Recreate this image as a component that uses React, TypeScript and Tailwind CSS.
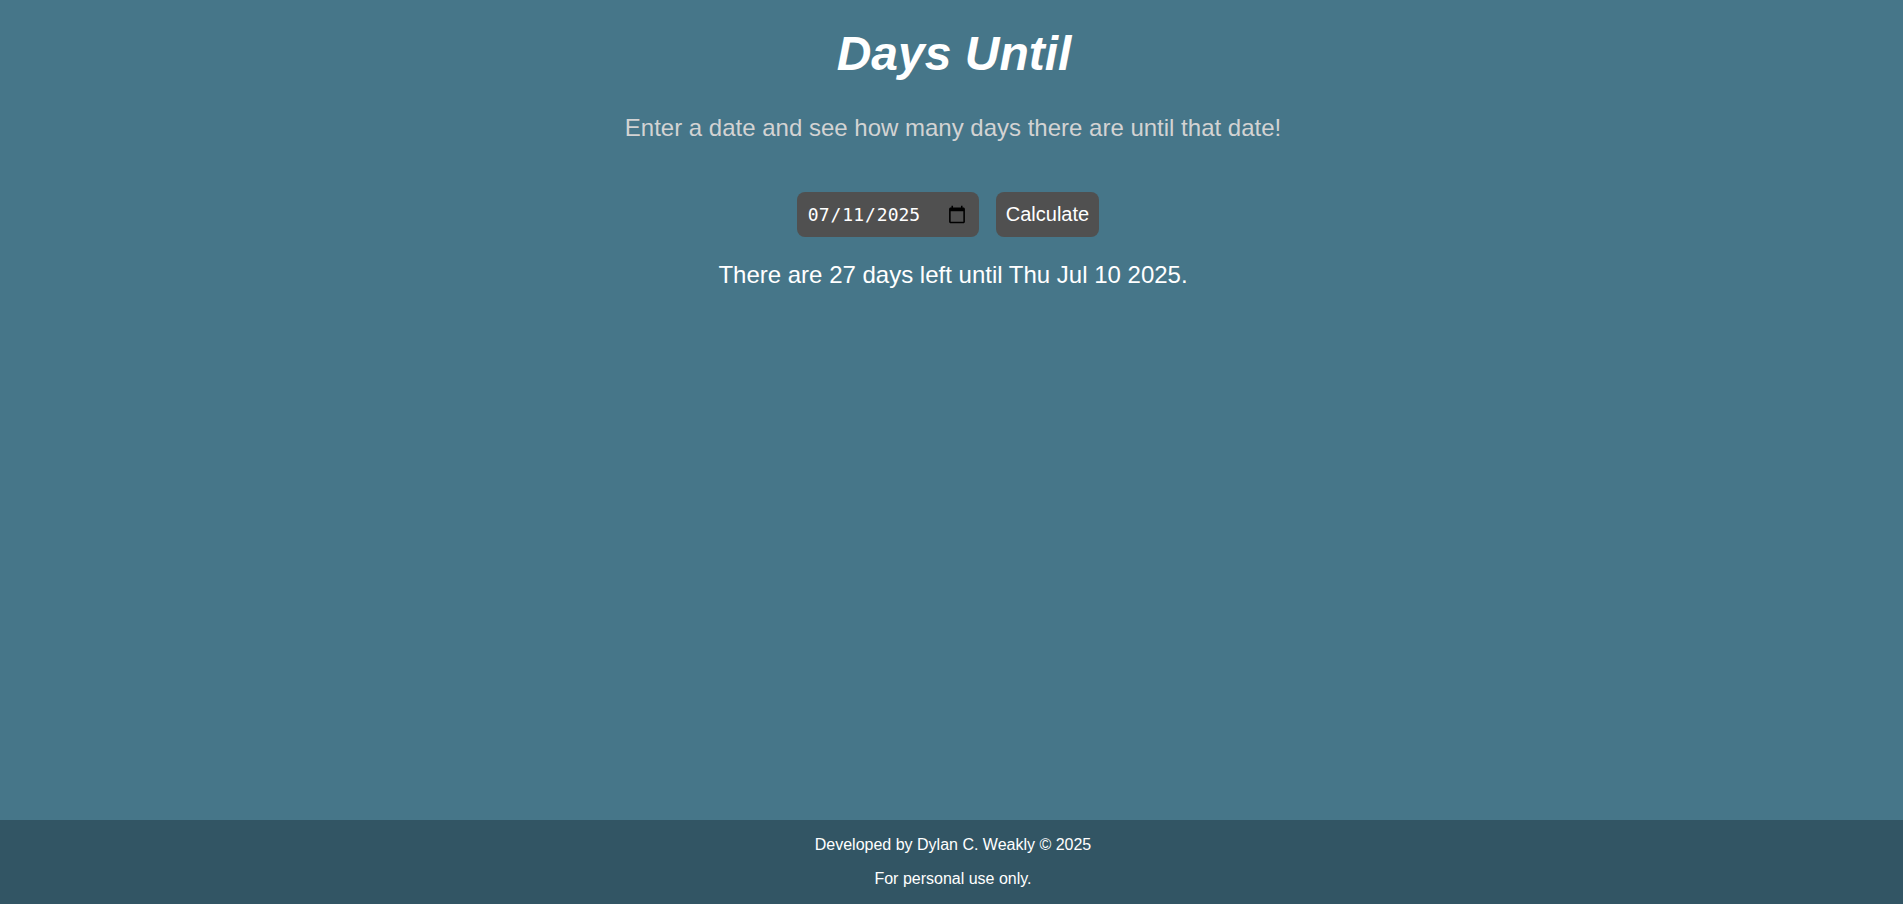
export default function App() {
  return (
    <div className="flex min-h-screen flex-col bg-[#467689] text-center font-['Liberation_Sans',Arial,sans-serif] text-white">
      <main className="flex grow flex-col items-center pt-6 pl-[3px]">
        <h1 className="pl-[2px] text-5xl leading-[60px] font-bold italic">Days Until</h1>
        <p className="mt-7 text-2xl text-[#d3d3d3]">Enter a date and see how many days there are until that date!</p>
        <form className="mt-12 flex gap-[17px] pr-[10px]" onSubmit={(event) => event.preventDefault()}>
          <input
            type="date"
            aria-label="Target date"
            defaultValue="2025-07-11"
            className="h-[45px] w-[182px] rounded-lg bg-[#505050] px-[10px] font-['DejaVu_Sans_Mono',monospace] text-lg font-medium [&::-webkit-calendar-picker-indicator]:size-5"
          />
          <button type="submit" className="h-[45px] rounded-lg bg-[#505050] px-[10px] pb-[2px] text-xl">
            Calculate
          </button>
        </form>
        <p className="mt-[22px] text-2xl">There are 27 days left until Thu Jul 10 2025.</p>
      </main>
      <footer className="flex flex-col gap-4 bg-[#325564] py-4 pl-[3px] text-base leading-[18px]">
        <p>Developed by Dylan C. Weakly © 2025</p>
        <p>For personal use only.</p>
      </footer>
    </div>
  );
}
